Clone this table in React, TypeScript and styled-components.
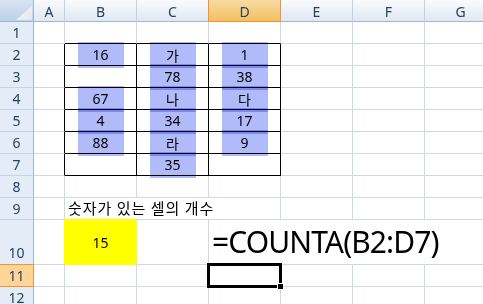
import { Fragment } from "react";
import styled, { createGlobalStyle, css } from "styled-components";

const gridLine = "#d0d7e5";
const headerLine = "#9eb6ce";
const headerText = "#27415f";
const activeLine = "#f29436";

const COLUMNS = ["A", "B", "C", "D", "E", "F", "G"];
const ROWS = [1, 2, 3, 4, 5, 6, 7, 8, 9, 10, 11, 12];

// values inside the bordered block B2:D7
const VALUES: Record<string, string> = {
  B2: "16",
  B4: "67",
  B5: "4",
  B6: "88",
  C2: "가",
  C3: "78",
  C4: "나",
  C5: "34",
  C6: "라",
  C7: "35",
  D2: "1",
  D3: "38",
  D4: "다",
  D5: "17",
  D6: "9",
};

const ACTIVE_COL = "D";
const ACTIVE_ROW = 11;

const GlobalStyle = createGlobalStyle`
  html, body {
    margin: 0;
    padding: 0;
    background: #ffffff;
    overflow: hidden;
  }
`;

const Sheet = styled.div`
  display: grid;
  grid-template-columns: 34px 31px repeat(6, 72px);
  grid-template-rows: repeat(10, 22px) 45px repeat(2, 22px);
  width: 483px;
  height: 304px;
  overflow: hidden;
  font-family: "Noto Sans", "Noto Sans CJK KR", sans-serif;
  font-size: 14px;
  color: #000;
`;

const Corner = styled.div`
  position: relative;
  background: linear-gradient(#d9e4f2, #bcd0ea);
  border-right: 1px solid ${headerLine};
  border-bottom: 1px solid ${headerLine};

  &::after {
    content: "";
    position: absolute;
    right: 1px;
    bottom: 1px;
    width: 16px;
    height: 14px;
    background: linear-gradient(135deg, #f7f9fc, #e2e8f0);
    clip-path: polygon(100% 0, 100% 100%, 0 100%);
  }
`;

const ColHeader = styled.div<{ $active?: boolean }>`
  display: flex;
  align-items: center;
  justify-content: center;
  padding-top: 1px;
  color: ${headerText};
  background: linear-gradient(#f9fbfd, #e1e8f1);
  border-right: 1px solid #c3d0e0;
  border-bottom: 1px solid ${headerLine};

  ${({ $active }) =>
    $active &&
    css`
      background: linear-gradient(#f9dba5, #f1c15f);
      border-right-color: ${activeLine};
      border-bottom-color: ${activeLine};
      box-shadow: -1px 0 0 ${activeLine};
    `}
`;

const RowHeader = styled.div<{ $active?: boolean; $tall?: boolean }>`
  display: flex;
  justify-content: center;
  align-items: ${({ $tall }) => ($tall ? "flex-end" : "center")};
  padding-bottom: ${({ $tall }) => ($tall ? "2px" : "0")};
  color: ${headerText};
  background: #e4ecf7;
  border-right: 1px solid ${headerLine};
  border-bottom: 1px solid #c5d3e4;

  ${({ $active }) =>
    $active &&
    css`
      background: #fdd596;
      border-right-color: ${activeLine};
      border-bottom-color: ${activeLine};
      box-shadow: 0 -1px 0 ${activeLine};
    `}
`;

const Cell = styled.div<{
  $span?: number;
  $boxRight?: boolean;
  $boxBottom?: boolean;
  $fill?: string;
  $align?: "left" | "center";
  $valign?: "center" | "bottom";
  $marked?: boolean;
}>`
  position: ${({ $marked }) => ($marked ? "relative" : "static")};
  grid-column: span ${({ $span }) => $span ?? 1};
  display: flex;
  justify-content: ${({ $align }) => ($align === "left" ? "flex-start" : "center")};
  align-items: ${({ $valign }) => ($valign === "bottom" ? "flex-end" : "center")};
  padding-left: ${({ $align }) => ($align === "left" ? "3px" : "0")};
  white-space: nowrap;
  border-right: 1px solid ${({ $boxRight }) => ($boxRight ? "#000" : gridLine)};
  border-bottom: 1px solid ${({ $boxBottom }) => ($boxBottom ? "#000" : gridLine)};

  ${({ $fill }) =>
    $fill &&
    css`
      background: ${$fill};
      border-right-color: ${$fill};
      border-bottom-color: ${$fill};
      box-shadow: -1px -1px 0 ${$fill};
    `}
`;

const Label = styled.span`
  padding-bottom: 1px;
  font-family: "Noto Sans CJK KR", sans-serif;
  font-size: 15px;
  letter-spacing: 1px;
`;

const Formula = styled.span`
  font-family: "Noto Sans", sans-serif;
  font-size: 30px;
  letter-spacing: -0.9px;
  line-height: 1;
  padding-bottom: 7px;
`;

// highlighter stroke laid over each filled value
const Mark = styled.span`
  position: absolute;
  left: 50%;
  top: -2px;
  bottom: -3px;
  width: 46px;
  margin-left: -23px;
  background: #b1bbf9;
  mix-blend-mode: multiply;
  pointer-events: none;
`;

const Cursor = styled.span`
  position: absolute;
  left: -2px;
  top: -2px;
  right: -2px;
  bottom: -2px;
  border: 3px solid #000;
  box-sizing: border-box;
  z-index: 2;
`;

const FillHandle = styled.span`
  position: absolute;
  right: -4px;
  bottom: -4px;
  width: 7px;
  height: 7px;
  background: #000;
  border: 1px solid #fff;
  box-sizing: border-box;
  z-index: 3;
`;

function BlockCell({ col, row }: { col: string; row: number }) {
  const ci = COLUMNS.indexOf(col);
  const value = VALUES[`${col}${row}`];
  const active = col === ACTIVE_COL && row === ACTIVE_ROW;
  return (
    <Cell
      $boxRight={row >= 2 && row <= 7 && ci <= 3}
      $boxBottom={row >= 1 && row <= 7 && ci >= 1 && ci <= 3}
      $marked={!!value || active}
    >
      {value}
      {value && <Mark />}
      {active && (
        <>
          <Cursor />
          <FillHandle />
        </>
      )}
    </Cell>
  );
}

function SheetRow({ row }: { row: number }) {
  if (row === 9) {
    return (
      <>
        <BlockCell col="A" row={9} />
        <Cell $span={3} $align="left" $valign="bottom">
          <Label>숫자가 있는 셀의 개수</Label>
        </Cell>
        <BlockCell col="E" row={9} />
        <BlockCell col="F" row={9} />
        <BlockCell col="G" row={9} />
      </>
    );
  }
  if (row === 10) {
    return (
      <>
        <BlockCell col="A" row={10} />
        <Cell $fill="#ffff00">15</Cell>
        <BlockCell col="C" row={10} />
        <Cell $span={4} $align="left" $valign="bottom">
          <Formula>=COUNTA(B2:D7)</Formula>
        </Cell>
      </>
    );
  }
  return (
    <>
      {COLUMNS.map((col) => (
        <BlockCell key={col} col={col} row={row} />
      ))}
    </>
  );
}

export default function App() {
  return (
    <>
      <GlobalStyle />
      <Sheet>
        <Corner />
        {COLUMNS.map((col) => (
          <ColHeader key={col} $active={col === ACTIVE_COL}>
            {col}
          </ColHeader>
        ))}
        {ROWS.map((row) => (
          <Fragment key={row}>
            <RowHeader $active={row === ACTIVE_ROW} $tall={row === 10}>
              {row}
            </RowHeader>
            <SheetRow row={row} />
          </Fragment>
        ))}
      </Sheet>
    </>
  );
}
